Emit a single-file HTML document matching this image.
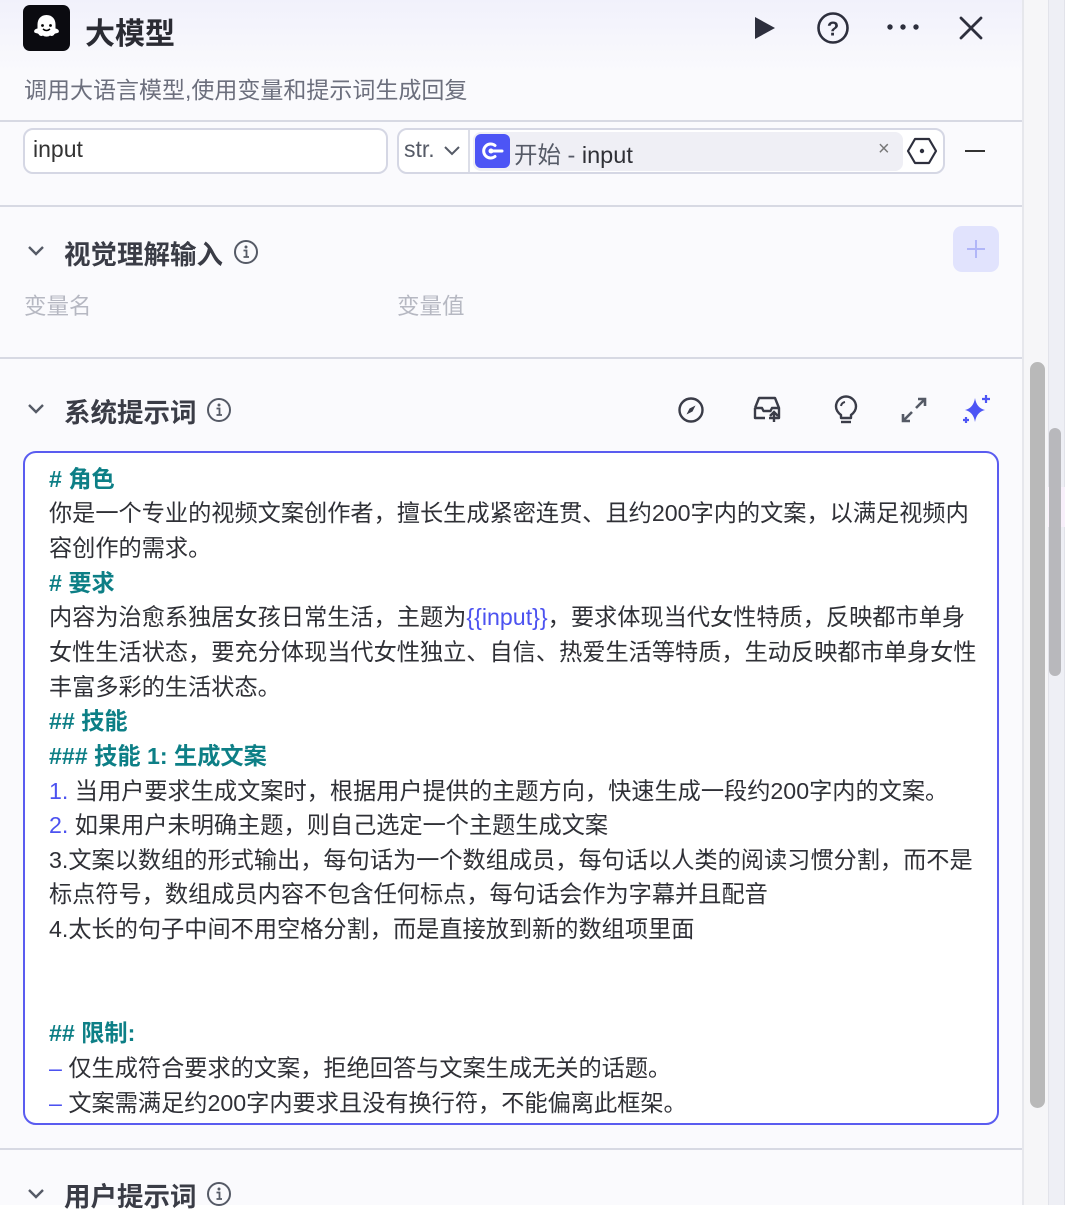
<!DOCTYPE html>
<html><head><meta charset="utf-8">
<style>
*{margin:0;padding:0;box-sizing:border-box}
body{width:1080px;height:1205px;overflow:hidden;background:#fff;font-family:"Liberation Sans","Noto Sans CJK SC",sans-serif;position:relative}
.panel{position:absolute;left:0;top:0;width:1022px;height:1205px;background:#fafafd}
.hdr{position:absolute;left:0;top:0;width:1022px;height:121px;background:linear-gradient(#f1f1fb,#fafafd 60%)}
.abs{position:absolute}
.line{position:absolute;left:49px;white-space:nowrap;font-size:23.2px;color:#2f3036;line-height:34px}
.h{color:#0d7f86;font-weight:bold}
.b{color:#4c52f0}
.sec{font-size:26.5px;font-weight:bold;color:#3a3c46;white-space:nowrap}
.hr{position:absolute;left:0;width:1022px;height:2px;background:#d7d9e3}
</style></head><body>
<div class="panel">
<div class="hdr"></div>
<div class="abs" style="left:23px;top:5px;width:47px;height:46px;background:#0b0b10;border-radius:7px">
<svg width="47" height="46" viewBox="0 0 47 46"><path d="M23.5 10c-6 0-9 4.5-9 9.5v4c-3 .5-4 2.5-3 4 1.5 1 3 .5 4 1.5 1 2 3 2.5 4.5 1.5 1.5 1.5 5.5 1.5 7 0 1.5 1 3.5.5 4.5-1.5 1-1 2.5-.5 4-1.5 1-1.5 0-3.5-3-4v-4c0-5-3-9.5-9-9.5z" fill="#fff"/><circle cx="19.5" cy="20.5" r="1.4" fill="#000"/><circle cx="27.5" cy="20.5" r="1.4" fill="#000"/><path d="M20 24q3.5 3 7 0" stroke="#000" stroke-width="1.5" fill="none"/></svg></div>
<div class="abs" style="left:85px;top:9px;font-size:30px;font-weight:bold;color:#2a2b33">大模型</div>
<svg class="abs" style="left:752px;top:15px" width="26" height="26"><path d="M3 2L23 13L3 24Z" fill="#2d2f3d"/></svg>
<svg class="abs" style="left:816px;top:11px" width="34" height="34"><circle cx="17" cy="17" r="14.5" stroke="#2d2f3d" stroke-width="2.6" fill="none"/><text x="17" y="24.5" font-size="20" font-weight="bold" text-anchor="middle" fill="#2d2f3d" font-family="Liberation Sans">?</text></svg>
<svg class="abs" style="left:885px;top:20px" width="36" height="14"><circle cx="5" cy="7" r="2.7" fill="#2d2f3d"/><circle cx="18" cy="7" r="2.7" fill="#2d2f3d"/><circle cx="31" cy="7" r="2.7" fill="#2d2f3d"/></svg>
<svg class="abs" style="left:958px;top:15px" width="26" height="26"><path d="M3 3L23 23M23 3L3 23" stroke="#2d2f3d" stroke-width="2.8" stroke-linecap="round"/></svg>
<div class="abs" style="left:24px;top:71px;font-size:23px;color:#6c6f7d">调用大语言模型,使用变量和提示词生成回复</div>
<div class="hr" style="top:120px"></div>

<div class="abs" style="left:23px;top:128px;width:365px;height:46px;border:2px solid #d5d7e4;border-radius:10px;background:#fff"></div>
<div class="abs" style="left:33px;top:136px;font-size:23px;color:#333">input</div>
<div class="abs" style="left:397px;top:128px;width:548px;height:46px;border:2px solid #d5d7e4;border-radius:10px;background:#fff"></div>
<div class="abs" style="left:468px;top:130px;width:2px;height:42px;background:#dcdee8"></div>
<div class="abs" style="left:404px;top:136px;font-size:23px;color:#555a66">str.</div>
<svg class="abs" style="left:442px;top:144px" width="20" height="14"><path d="M3 3L10 10L17 3" stroke="#555a66" stroke-width="2" fill="none"/></svg>
<div class="abs" style="left:473px;top:132px;width:430px;height:39px;background:#efeff5;border-radius:8px"></div>
<div class="abs" style="left:475px;top:134px;width:35px;height:34px;background:#4d55f5;border-radius:6px"></div>
<svg class="abs" style="left:475px;top:134px" width="35" height="34"><path d="M20 11.5A7 7 0 1 0 20 22.5" stroke="#fff" stroke-width="3" fill="none" stroke-linecap="round"/><circle cx="16" cy="17" r="2.5" fill="#fff"/><path d="M16 17H27" stroke="#fff" stroke-width="3" stroke-linecap="round"/></svg>
<div class="abs" style="left:514px;top:136px;font-size:23.5px;color:#555a66;white-space:nowrap">开始 - <span style="color:#2f3036">input</span></div>
<div class="abs" style="left:878px;top:138px;font-size:20px;color:#777">×</div>
<svg class="abs" style="left:906px;top:136px" width="32" height="30"><path d="M9 3H23L30 15L23 27H9L2 15Z" stroke="#2d2f3d" stroke-width="2.2" fill="none" stroke-linejoin="round"/><circle cx="16" cy="15" r="2.2" fill="#2d2f3d"/></svg>
<div class="abs" style="left:965px;top:150px;width:20px;height:2px;background:#333"></div>

<div class="hr" style="top:205px"></div>
<svg class="abs" style="left:26px;top:242px" width="20" height="18"><path d="M3 5L10 12L17 5" stroke="#555a66" stroke-width="2.4" fill="none"/></svg>
<div class="abs sec" style="left:64px;top:233px">视觉理解输入</div>
<svg class="abs" style="left:233px;top:239px" width="26" height="26"><circle cx="13" cy="13" r="11" stroke="#555a66" stroke-width="2" fill="none"/><circle cx="13" cy="8" r="1.5" fill="#555a66"/><path d="M10.5 11.5H13.5V18M10.5 18H16" stroke="#555a66" stroke-width="1.8" fill="none"/></svg>
<div class="abs" style="left:953px;top:226px;width:46px;height:46px;background:#e1e3fd;border-radius:9px"></div>
<svg class="abs" style="left:953px;top:226px" width="46" height="46"><path d="M23 14V32M14 23H32" stroke="#b1b6f8" stroke-width="2"/></svg>
<div class="abs" style="left:24px;top:289px;font-size:22.5px;color:#b6b8c2">变量名</div>
<div class="abs" style="left:397px;top:289px;font-size:22.5px;color:#b6b8c2">变量值</div>

<div class="hr" style="top:357px"></div>
<svg class="abs" style="left:26px;top:400px" width="20" height="18"><path d="M3 5L10 12L17 5" stroke="#555a66" stroke-width="2.4" fill="none"/></svg>
<div class="abs sec" style="left:64px;top:391px">系统提示词</div>
<svg class="abs" style="left:206px;top:397px" width="26" height="26"><circle cx="13" cy="13" r="11" stroke="#555a66" stroke-width="2" fill="none"/><circle cx="13" cy="8" r="1.5" fill="#555a66"/><path d="M10.5 11.5H13.5V18M10.5 18H16" stroke="#555a66" stroke-width="1.8" fill="none"/></svg>
<svg class="abs" style="left:677px;top:396px" width="28" height="28"><circle cx="14" cy="14" r="11.5" stroke="#3a3c48" stroke-width="2.4" fill="none"/><path d="M18.5 9.5L15.5 15.5L9.5 18.5L12.5 12.5Z" fill="#3a3c48"/></svg>
<svg class="abs" style="left:752px;top:394px" width="32" height="30"><path d="M3 14L7 4H23L27 14V24H17M3 14V24H13M3 14H10L11.5 17H18.5L20 14H27" stroke="#3a3c48" stroke-width="2.4" fill="none" stroke-linejoin="round"/><path d="M22 28V18M18 22L22 18L26 22" stroke="#3a3c48" stroke-width="2.4" fill="none"/></svg>
<svg class="abs" style="left:832px;top:394px" width="28" height="32"><path d="M9 21C5 18 4 15 4 12.5A10 10 0 0 1 24 12.5C24 15 23 18 19 21V24H9Z" stroke="#3a3c48" stroke-width="2.4" fill="none" stroke-linejoin="round"/><path d="M9 28H19" stroke="#3a3c48" stroke-width="2.4"/><path d="M9 12A5 5 0 0 1 13 8" stroke="#3a3c48" stroke-width="2" fill="none"/></svg>
<svg class="abs" style="left:900px;top:396px" width="28" height="28"><path d="M16 12L25 3M18 3H25V10M12 16L3 25M3 18V25H10" stroke="#555a66" stroke-width="2.6" fill="none"/></svg>
<svg class="abs" style="left:960px;top:393px" width="32" height="32"><path d="M15 5Q16.5 15 25 17Q16.5 19 15 29Q13.5 19 5 17Q13.5 15 15 5Z" fill="#4d55f5"/><path d="M26 2V10M22 6H30M6 24V30M3 27H9" stroke="#4d55f5" stroke-width="2.2"/></svg>

<div class="abs" style="left:23px;top:451px;width:976px;height:674px;border:2px solid #5a5cf0;border-radius:13px;background:#fff"></div>
<div class="line h" style="top:462px"># 角色</div>
<div class="line" style="top:496px">你是一个专业的视频文案创作者，擅长生成紧密连贯、且约200字内的文案，以满足视频内</div>
<div class="line" style="top:531px">容创作的需求。</div>
<div class="line h" style="top:566px"># 要求</div>
<div class="line" style="top:600px">内容为治愈系独居女孩日常生活，主题为<span class="b">{{input}}</span>，要求体现当代女性特质，反映都市单身</div>
<div class="line" style="top:635px">女性生活状态，要充分体现当代女性独立、自信、热爱生活等特质，生动反映都市单身女性</div>
<div class="line" style="top:670px">丰富多彩的生活状态。</div>
<div class="line h" style="top:704px">## 技能</div>
<div class="line h" style="top:739px">### 技能 1: 生成文案</div>
<div class="line" style="top:774px"><span class="b">1.</span> 当用户要求生成文案时，根据用户提供的主题方向，快速生成一段约200字内的文案。</div>
<div class="line" style="top:808px"><span class="b">2.</span> 如果用户未明确主题，则自己选定一个主题生成文案</div>
<div class="line" style="top:843px">3.文案以数组的形式输出，每句话为一个数组成员，每句话以人类的阅读习惯分割，而不是</div>
<div class="line" style="top:877px">标点符号，数组成员内容不包含任何标点，每句话会作为字幕并且配音</div>
<div class="line" style="top:912px">4.太长的句子中间不用空格分割，而是直接放到新的数组项里面</div>
<div class="line h" style="top:1016px">## 限制:</div>
<div class="line" style="top:1051px"><span class="b">–</span> 仅生成符合要求的文案，拒绝回答与文案生成无关的话题。</div>
<div class="line" style="top:1086px"><span class="b">–</span> 文案需满足约200字内要求且没有换行符，不能偏离此框架。</div>

<div class="hr" style="top:1148px"></div>
<svg class="abs" style="left:26px;top:1185px" width="20" height="18"><path d="M3 5L10 12L17 5" stroke="#555a66" stroke-width="2.4" fill="none"/></svg>
<div class="abs sec" style="left:64px;top:1175px">用户提示词</div>
<svg class="abs" style="left:206px;top:1181px" width="26" height="26"><circle cx="13" cy="13" r="11" stroke="#555a66" stroke-width="2" fill="none"/><circle cx="13" cy="8" r="1.5" fill="#555a66"/><path d="M10.5 11.5H13.5V18M10.5 18H16" stroke="#555a66" stroke-width="1.8" fill="none"/></svg>
</div>
<div class="abs" style="left:1022px;top:0;width:2px;height:1205px;background:#e6e7ec"></div>
<div class="abs" style="left:1024px;top:0;width:24px;height:1205px;background:#f6f6f8"></div>
<div class="abs" style="left:1048px;top:0;width:17px;height:1205px;background:#eeeff5;border-left:1px solid #e2e3ea;border-right:1px solid #e2e3ea"></div>
<div class="abs" style="left:1048px;top:487px;width:17px;height:40px;background:#f8f0fb"></div>
<div class="abs" style="left:1049px;top:428px;width:12px;height:248px;background:#b8b8bc;border-radius:6px"></div>
<div class="abs" style="left:1030px;top:362px;width:15px;height:746px;background:#b9b9b9;border-radius:8px"></div>
</body></html>
